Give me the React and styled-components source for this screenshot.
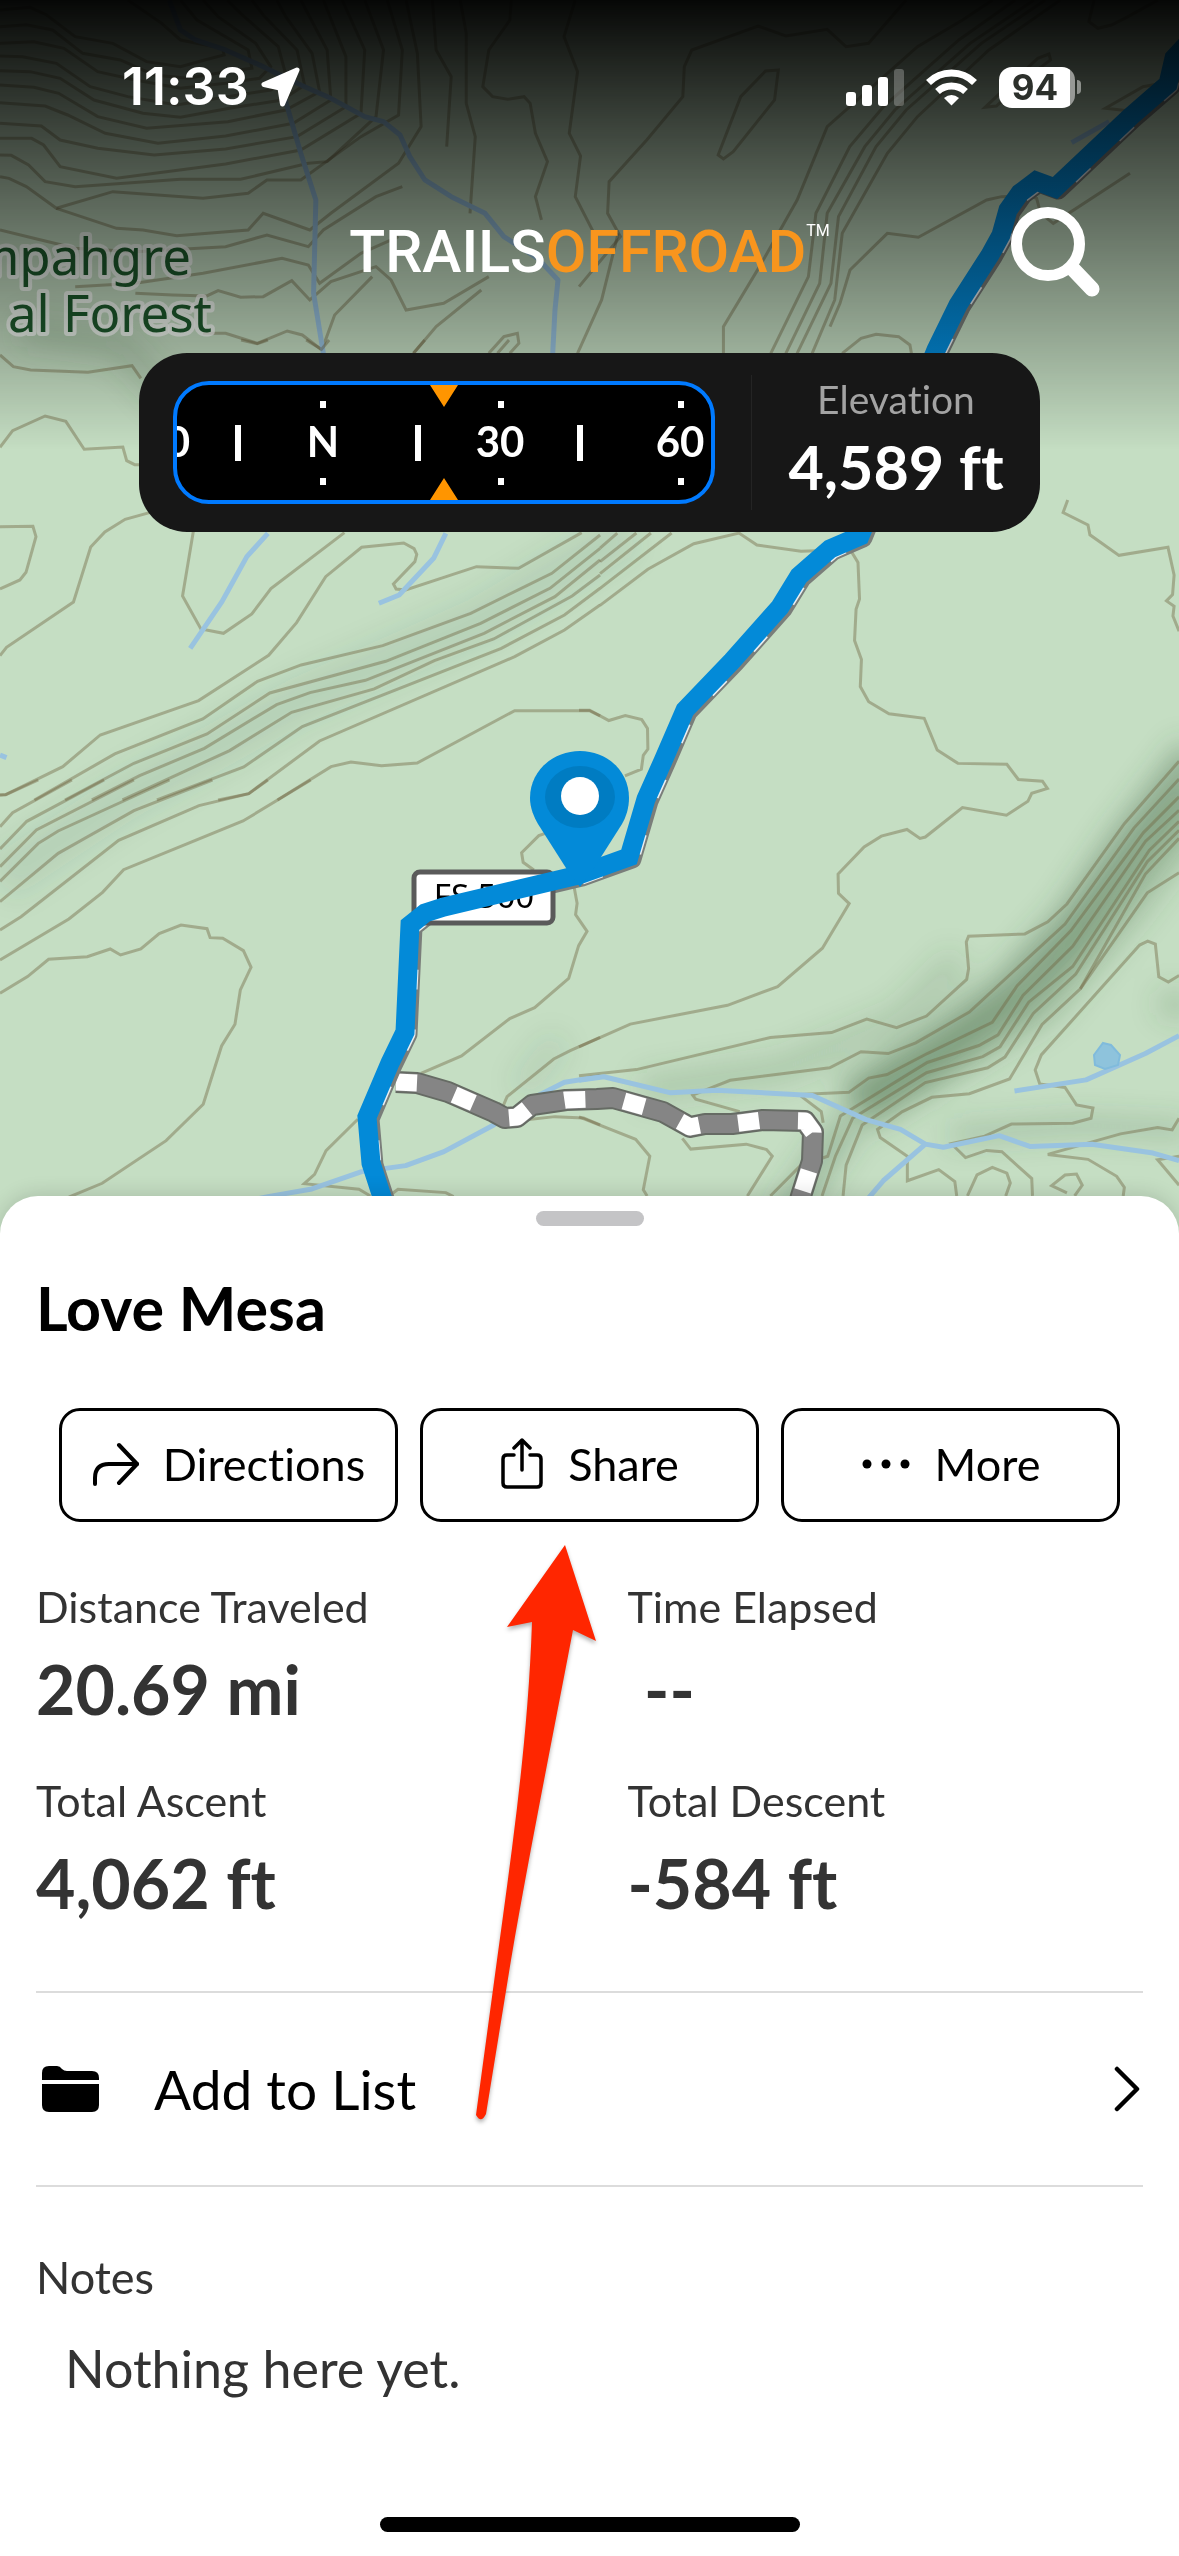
import React from 'react';
import styled, { createGlobalStyle } from 'styled-components';

const GlobalStyle = createGlobalStyle`
  *, *::before, *::after { box-sizing: border-box; }
  body {
    margin: 0;
    background: #fff;
    font-family: Lato, "Open Sans", sans-serif;
    font-variant-ligatures: none;
    -webkit-font-smoothing: antialiased;
  }
  button { font: inherit; color: inherit; cursor: pointer; }
`;

/* ---------- page shell ---------- */

const Page = styled.main`
  display: flex;
  flex-direction: column;
  min-height: 100vh;
`;

const Hero = styled.section`
  position: relative;
  flex: 1;
  min-height: 640px;
  overflow: hidden;
  background: #c5dec3;
`;

const MapCanvas = styled.svg`
  position: absolute;
  inset: 0;
  width: 100%;
  height: 100%;
`;

const TopShade = styled.div`
  position: absolute;
  inset: 0 0 auto;
  height: 450px;
  background: linear-gradient(rgba(0, 0, 0, 0.97), rgba(0, 0, 0, 0));
`;

const HeroContent = styled.div`
  position: relative;
  display: flex;
  flex-direction: column;
  color: #fff;
`;

/* ---------- status bar ---------- */

const StatusBar = styled.header`
  display: flex;
  align-items: center;
  justify-content: space-between;
  padding: 60px 98px 0 122px;
  font-family: Inter, "Liberation Sans", sans-serif;
`;

const StatusGroup = styled.div`
  display: flex;
  align-items: center;
  gap: ${(p) => p.$gap}px;
`;

const Clock = styled.time`
  font-size: 52px;
  line-height: 54px;
  font-weight: 600;
`;

const Battery = styled.div`
  display: flex;
  align-items: center;
  gap: 2px;
  &::after {
    content: "";
    width: 4px;
    height: 14px;
    border-radius: 0 4px 4px 0;
    background: #8d908c;
  }
`;

const BatteryLevel = styled.span`
  width: 76px;
  height: 41px;
  border-radius: 13px;
  background: linear-gradient(90deg, #fff 71px, #979996 71px);
  color: #2c302b;
  font-size: 35px;
  line-height: 41px;
  font-weight: 700;
  text-align: center;
  padding-right: 4px;
`;

/* ---------- brand row ---------- */

const BrandRow = styled.div`
  display: grid;
  grid-template-columns: 1fr auto 1fr;
  align-items: center;
  margin-top: 93px;
  padding: 0 79px;
`;

const Logo = styled.h1`
  grid-column: 2;
  display: flex;
  align-items: flex-start;
  margin: 0;
  font-family: Roboto, "Liberation Sans", sans-serif;
  font-size: 59px;
  line-height: 90px;
  font-weight: 500;
`;

const LogoAccent = styled.span`
  color: #f8951d;
`;

const TradeMark = styled.span`
  font-size: 16px;
  line-height: 48px;
  font-weight: 400;
`;

const SearchButton = styled.button`
  justify-self: end;
  display: flex;
  padding: 0;
  border: 0;
  background: none;
  color: #fff;
`;

/* ---------- compass card ---------- */

const CompassCard = styled.section`
  display: flex;
  align-items: center;
  align-self: center;
  width: calc(100% - 278px);
  margin-top: 56px;
  padding: 22px 0 22px 34px;
  border-radius: 48px;
  background: #171717;
`;

const Dial = styled.div`
  flex: none;
  display: flex;
  margin: 6px 36px 6px 0;
  border: 4px solid #007aff;
  border-radius: 36px;
  background: #000;
  overflow: hidden;
`;

const DialText = styled.text`
  fill: #fff;
  font: 700 42px Lato, sans-serif;
  text-anchor: ${(p) => p.$anchor || 'middle'};
`;

const Elevation = styled.dl`
  flex: 1;
  align-self: stretch;
  display: flex;
  flex-direction: column;
  gap: 8px;
  margin: 0;
  border-left: 1px solid #242424;
  text-align: center;
`;

const ElevationLabel = styled.dt`
  font-size: 39px;
  line-height: 48px;
  color: #a3a3a3;
`;

const ElevationValue = styled.dd`
  margin: 0;
  font-size: 61px;
  line-height: 72px;
  font-weight: 700;
`;

/* ---------- map text ---------- */

const ForestLabel = styled.text`
  font: 400 51px "Noto Sans", sans-serif;
  fill: #1d5a2c;
  stroke: rgba(255, 255, 255, 0.7);
  stroke-width: 8px;
  stroke-linejoin: round;
  paint-order: stroke;
  text-anchor: end;
`;

const ShieldText = styled.text`
  font: 400 33px "Noto Sans", sans-serif;
  fill: #000;
  text-anchor: middle;
`;

/* ---------- bottom sheet ---------- */

const Sheet = styled.section`
  position: relative;
  display: flex;
  flex-direction: column;
  margin-top: -40px;
  padding: 15px 36px 24px;
  border-radius: 38px 38px 0 0;
  background: #fff;
  box-shadow: 0 -2px 20px rgba(0, 0, 0, 0.14);
  color: #333;
`;

const Handle = styled.div`
  align-self: center;
  width: 108px;
  height: 15px;
  border-radius: 8px;
  background: #c4c4c6;
`;

const Title = styled.h2`
  margin: 46px 0 0;
  font-size: 61px;
  line-height: 72px;
  font-weight: 700;
  color: #000;
`;

const Actions = styled.div`
  display: grid;
  grid-template-columns: repeat(3, 1fr);
  gap: 22px;
  margin: 64px 23px 0;
`;

const ActionButton = styled.button`
  display: flex;
  align-items: center;
  justify-content: center;
  gap: 24px;
  padding: 26px 0 28px;
  border: 3px solid #000;
  border-radius: 21px;
  background: #fff;
  color: #000;
  font-size: 45px;
  line-height: 54px;
`;

const Stats = styled.dl`
  display: grid;
  grid-template-columns: 1fr 1fr;
  gap: 46px 76px;
  margin: 59px 0 0;
`;

const Stat = styled.div`
  display: flex;
  flex-direction: column;
  gap: 16px;
`;

const StatLabel = styled.dt`
  font-size: 43px;
  line-height: 52px;
`;

const StatValue = styled.dd`
  margin: 0;
  font-size: 68px;
  line-height: 80px;
  font-weight: 700;
  white-space: pre;
`;

const ListButton = styled.button`
  display: flex;
  align-items: center;
  gap: 54px;
  margin-top: 68px;
  padding: 63px 3px 63px 6px;
  border: solid #dcdcdc;
  border-width: 2px 0;
  background: none;
  color: #000;
  font-size: 55px;
  line-height: 66px;
  text-align: left;
`;

const ListLabel = styled.span`
  flex: 1;
`;

const NotesTitle = styled.h3`
  margin: 63px 0 0;
  font-size: 45px;
  line-height: 54px;
  font-weight: 400;
`;

const NotesBody = styled.p`
  margin: 33px 0 0;
  padding-left: 29px;
  font-size: 52px;
  line-height: 62px;
`;

const HomeIndicator = styled.div`
  align-self: center;
  width: 420px;
  height: 15px;
  margin-top: 118px;
  border-radius: 8px;
  background: #000;
`;

const Pointer = styled.svg`
  position: absolute;
  top: 341px;
  left: calc(50% - 120px);
  pointer-events: none;
  filter: drop-shadow(0 3px 2px rgba(0, 0, 0, 0.3));
`;

/* ---------- map data ---------- */

const tiles = [
  {
    transform: 'scale(0.752 0.3333)',
    contours: [
      'M0 30L40 22L62 45L100 110L150 130L195 185L240 200L272 180L298 165L296 145L240 120L215 70L170 0',
      'M0 80L35 74L70 90L110 160L160 180L205 225L250 235L300 215L335 205L330 150L262 60L240 0',
      'M0 130L45 125L85 145L130 215L180 240L240 265L300 250L345 235L360 200L340 130L290 50L270 0',
      'M0 168L30 170L75 190L120 260L170 290L235 315L302 290L360 270L382 240L370 140L320 40L302 0',
      'M0 212L40 215L80 235L125 300L190 340L240 352L305 325L375 300L405 255L395 150L350 45L335 0',
      'M0 255L45 262L78 280L130 350L195 385L303 365L380 330L425 275L415 160L380 50L368 0',
      'M0 308L60 318L90 345L140 400L210 430L300 408L390 370L440 300L435 150L400 0',
      'M0 370L55 378L80 420L130 445L205 465L300 447L395 410L460 320L460 170L430 0',
      'M0 415L42 415L58 435L80 500L155 535L300 492L400 450L480 340L485 150L455 0',
      'M0 465L15 466L38 495L60 545L100 560L240 538L320 538L410 490L435 485L500 350L510 150L485 0',
      'M0 530L12 535L35 560L75 625L150 575L270 595L330 580L355 540L400 540L480 410L530 345L535 150L515 0',
      'M75 625L155 685L190 690L235 707L330 690L350 640L412 690L440 640L530 490L560 380L555 160L540 0',
      'M0 690L45 715L100 745L180 755L300 740L355 705L410 740L430 690L500 590L535 560',
      'M100 860L180 850L270 820L375 775L410 795L425 850L480 760L530 710',
      'M180 880L230 885L275 888L290 872L320 892L350 890L388 842L412 900L440 845L500 800L520 840L540 930L590 910L650 830',
      'M270 1000L300 1000L342 1030L382 993L402 1005L428 1050L445 945L495 830',
      'M575 0L580 150L600 230L594 440',
      'M612 0L620 100L620 310L632 410L625 640',
      'M680 0L678 60L650 150L642 260L655 290L675 298L697 290L705 310L712 400L728 485L712 590L720 660',
      'M765 0L750 110L768 215L757 400L772 468L765 590L790 700',
      'M1205 0L1155 130L1125 140L1100 88L1045 108L1008 78L920 150L910 200L908 290L860 420L810 545L808 640L825 710L770 860',
      'M1035 210L1018 213L985 290L955 465L962 477L975 455L1030 300Z',
      'M1320 0L1280 60L1220 140L1165 250L1100 380L1080 490L1060 600L1010 800L962 980L962 1060',
      'M1350 0L1275 120L1175 320L1130 440L1085 640L1075 830L1025 1060',
      'M1375 0L1290 130L1190 330L1150 440L1100 640L1090 850L1045 1060',
      'M1390 0L1305 130L1205 330L1165 440L1115 650L1105 850L1060 1060',
      'M1410 0L1315 150L1220 350L1180 460L1120 700L1110 900L1080 1060',
      'M1395 162L1380 175L1325 290L1310 322L1325 318L1370 225L1397 180Z',
      'M1455 0L1448 65L1460 85L1478 75L1500 50L1540 0',
      'M1568 240L1520 260L1470 325L1500 332',
      'M1120 1060L1145 1015L1165 1003L1195 1010L1210 1035L1212 1060',
      'M550 1060L580 980L640 870M650 1060L670 1010L688 1000L690 1030L678 1060M768 1060L800 900L822 700',
    ],
    streams: [
      'M225 0L240 90L260 120L300 150L350 200L400 255L440 295L485 350L510 365L532 405L545 470L565 540L600 590L645 640L670 710L715 775L742 840L738 930L735 1060',
      'M378 290L400 460L420 600L417 880L430 1060',
      'M1425 428L1475 365',
    ],
  },
  {
    transform: 'translate(830 50) scale(0.3333)',
    contours: [
      'M0 830L30 760L60 660L172 550L265 562L470 450L515 440L600 438L620 445L632 490L670 520L900 370',
    ],
    streams: [],
  },
  {
    transform: 'translate(0 340) scale(0.3827 0.3333)',
    contours: [
      'M0 45L35 80L80 90L230 97L345 77L368 115',
      'M630 0L672 11L700 0M800 0L840 28L860 0M1080 40L1110 0M1300 40L1330 0',
      'M0 322L33 272L118 228L172 244L220 328L321 321L331 362L352 374L380 374',
      'M0 560L86 559L94 590L68 697L52 720L0 747',
      'M0 947L17 922L192 786L237 621L274 576L327 538L400 515',
      'M505 575L477 768L525 867L584 880L658 822L708 746L900 578',
      'M1520 578L1355 685L1245 680L1060 750L1035 747L1028 732L1084 665L1089 643L1082 626L1055 609L945 622L851 710L775 848L702 946L519 1082L262 1185L164 1280L15 1364L0 1365',
      'M1568 585L1442 700L1230 820L1000 917L787 975L673 1024L530 1137L300 1242L90 1380',
      'M1568 625L1437 745L1256 850L1008 964L705 1059L541 1182L350 1270L170 1380',
      'M1568 660L1450 770L1265 880L955 1021L810 1058L723 1094L534 1225L365 1307L240 1380',
      'M1568 705L1495 768L1290 897L1135 962L978 1047L762 1117L600 1232L320 1380',
      'M1568 745L1475 825L1310 925L790 1160L637 1281L410 1380',
      'M1568 795L1475 870L1345 950L835 1203L650 1361L570 1380',
      'M1568 1128L1540 1112L1345 1112L1090 1269L997 1277L917 1266L865 1280L725 1380',
    ],
    streams: [
      'M700 580L645 650L580 785L497 925',
      'M1165 580L1133 655L1043 765L990 790',
      'M0 1245L17 1253',
    ],
  },
  {
    transform: 'translate(0 780) scale(0.3827 0.3333)',
    contours: [
      'M0 45L15 44L100 0',
      'M0 140L33 98L188 0',
      'M0 207L70 124L272 0',
      'M0 260L95 150L350 0',
      'M0 304L100 190L152 153L443 0',
      'M0 365L152 220L350 92L555 0',
      'M0 450L55 410L310 181L520 77L650 41L700 0',
      'M0 540L180 417L268 337L323 269L635 123L812 0',
      'M0 640L72 590L127 538L228 530L288 507L315 525L368 507L416 461L473 435L541 446L549 473L582 475L636 512L656 562L628 630L614 733L579 798L531 973L434 1082L267 1210L183 1250L120 1290',
      'M1425 160L1408 167L1363 218L1367 247L1395 270',
      'M1500 320L1508 370L1504 404L1534 454L1512 497L1486 595L1397 683L1332 716L1206 828L1100 880',
      'M1568 772L1490 812L1447 837L1325 950L1312 985',
      'M1568 1035L1525 1014L1450 1010L1370 1020',
      'M935 1018L852 1112L822 1183L795 1211L938 1228L968 1248',
      'M1020 1245L1040 1228L1165 1238L1185 1250',
    ],
    streams: [
      'M660 1260L700 1250L815 1227L945 1175L1060 1157L1160 1115L1290 1035L1400 950L1475 907L1568 890',
    ],
  },
  {
    transform: 'translate(579 500) scale(0.3827 0.4464)',
    contours: [
      'M55 236L180 155L300 98L418 74L465 101L580 115L640 113',
      'M55 198L242 74M55 165L188 74M55 138L150 74M55 108L100 74',
      'M710 113L729 140L733 222L724 245L720 315L738 357L735 418L757 452L810 479L902 489L936 560L990 590L1118 592L1148 626L1211 630L1224 646L1183 657L1173 675L1117 706L1002 689L905 755L891 758L857 738L790 753L745 777L677 838L678 881L706 904L636 1004L519 1090L388 1132L134 1174L0 1225',
      'M1277 0L1265 28L1330 56L1335 78L1411 124L1539 106L1555 168L1551 212L1535 226L1555 238L1552 260L1568 294',
      'M0 471L28 471L78 494L121 483L164 492L179 512L180 558L168 572L163 603L120 618',
      'M1568 585L1425 725L1275 905L1225 945L1165 972L1018 977L1012 990L1018 1050L1013 1074L908 1156L830 1182L752 1163L660 1193L500 1204L150 1276L0 1290',
      'M1568 625L1450 735L1270 950L1020 1147L880 1216L808 1240L737 1236L655 1272L395 1300L297 1333L305 1342L420 1370',
      'M1568 665L1475 745L1285 965L1145 1088L1080 1170L910 1240L805 1287L757 1295L705 1327L575 1332L633 1370L638 1395',
      'M1568 695L1480 765L1290 1000L1160 1110L1095 1198L1045 1222L910 1260L683 1380L650 1470L580 1490L500 1559',
      'M1568 720L1490 785L1290 1045L1175 1125L1100 1225L1055 1247L908 1283L715 1385L670 1470L635 1559',
      'M1568 740L1485 810L1298 1062L1187 1150L1113 1248L1068 1272L905 1305L740 1400L698 1490L690 1559',
      'M1568 758L1480 838L1310 1095L1210 1175L1125 1297L1020 1330L922 1338L845 1370L780 1410L787 1428L858 1470L858 1525L940 1500L982 1527L987 1559',
      'M1568 835L1485 880L1310 1095',
      'M1568 1065L1540 1080L1515 1068L1506 995L1486 988L1465 997L1208 1243L1192 1277L1204 1308L1270 1316L1300 1355L1343 1362L1338 1385L1290 1396L1130 1398L1060 1425L973 1442L1010 1473L1065 1457L1105 1460L1183 1520L1185 1559',
      'M1568 1385L1550 1411L1512 1406L1415 1420L1225 1466L1330 1477L1405 1515L1425 1540L1422 1559',
      'M1568 1470L1512 1478L1568 1535',
      'M1015 1559L1040 1512L1080 1495L1118 1508L1127 1530L1115 1559',
      'M1275 1552L1235 1536L1270 1512L1300 1510L1315 1535L1295 1559',
      'M0 1382L148 1432L185 1470L168 1545L178 1559',
      'M270 1430L292 1454L437 1443L490 1455L505 1470L440 1559',
    ],
    streams: [
      'M0 1300L65 1292L240 1328L360 1322L610 1334L750 1388L840 1410L905 1443L952 1450L1098 1424L1178 1448L1340 1443L1500 1463L1568 1480',
      'M905 1443L795 1525L750 1570',
      'M1138 1324L1325 1299L1480 1240L1568 1200',
    ],
  },
];

const route =
  'M1200 30L1174 58L1168 84L1130 117L1055 188L1036 181L1020 193L1008 210L1001 235L990 255L958 305L936 350L860 536L830 549L799 576L780 607L732 661L685 710L663 761L646 799L629 857L579 875L444 907L425 913L410 925L405 1032L390 1063L367 1117L371 1163L383 1200L392 1240';

const track =
  'M396 1082L417 1083L448 1092L494 1112L505 1118L517 1117L532 1105L566 1100L597 1099L613 1098L663 1112L690 1127L705 1124L732 1124L763 1120L805 1121L813 1132L812 1161L801 1196L790 1240';

function TrailMap() {
  return (
    <MapCanvas viewBox="0 0 1179 1236" preserveAspectRatio="xMidYMin slice" role="img" aria-label="Trail map">
      <defs>
        <filter id="shade" x="-30%" y="-30%" width="160%" height="160%">
          <feGaussianBlur stdDeviation="14" />
        </filter>
      </defs>
      <rect width="1179" height="1236" fill="#c5dec3" />
      <g fill="none" stroke="#3f6344" strokeLinejoin="round" filter="url(#shade)">
        <path d="M1200 755L1130 845L1075 925L1010 995L930 1055L850 1105" strokeWidth="46" opacity="0.38" />
        <path d="M1200 800L1120 905L1040 1000L940 1060L860 1110" strokeWidth="50" opacity="0.24" />
        <path d="M960 960L900 1020L780 1070L640 1090" strokeWidth="30" opacity="0.16" />
        <path d="M850 1120L810 1180L780 1220" strokeWidth="30" opacity="0.3" />
        <path d="M950 1135L1080 1125L1190 1130" strokeWidth="16" opacity="0.26" />
        <path d="M630 530L480 620L300 700L120 800L0 880" strokeWidth="46" opacity="0.1" />
        <path d="M20 330L120 345L170 400" strokeWidth="30" opacity="0.16" />
        <path d="M1160 1000L1190 1010" strokeWidth="26" opacity="0.22" />
        <path d="M560 1040L520 1090" strokeWidth="26" opacity="0.1" />
      </g>
      {tiles.map((tile) => (
        <g key={tile.transform} transform={tile.transform} fill="none">
          {tile.contours.map((d) => (
            <path key={d} d={d} stroke="#6f6440" strokeOpacity="0.42" strokeWidth="3" vectorEffect="non-scaling-stroke" />
          ))}
          {tile.streams.map((d) => (
            <path key={d} d={d} stroke="#99c3e0" strokeWidth="5" strokeLinejoin="round" vectorEffect="non-scaling-stroke" />
          ))}
        </g>
      ))}
      <path d="M1103 1043L1111 1045L1120 1055L1118 1065L1105 1069L1095 1065L1094 1055Z" fill="#8ec3dc" stroke="#80bbdc" strokeWidth="2" />
      <ForestLabel x="191" y="275">mpahgre</ForestLabel>
      <ForestLabel x="212" y="332">al Forest</ForestLabel>

      <g fill="none" strokeLinejoin="round">
        <path d={track} stroke="#666b64" strokeWidth="22" />
        <path d={track} stroke="#858585" strokeWidth="18" />
        <path d={track} stroke="#fff" strokeWidth="17" strokeDasharray="21 39" />
        <path d={route} stroke="#7a7e7a" strokeWidth="19" transform="translate(3 2)" />
        <path d={route} stroke="#e8eef2" strokeWidth="15" strokeDasharray="20 40" transform="translate(3 2)" />
      </g>
      <rect x="414" y="872" width="139" height="51" rx="6" fill="#fff" stroke="#5a5a5a" strokeWidth="5" />
      <ShieldText x="484" y="908">FS 500</ShieldText>
      <path d={route} fill="none" stroke="#038ad8" strokeWidth="19" strokeLinejoin="miter" />
      <path d="M580 751C553 751 530 771 530 798C530 808 534 817 538 824L566 868L580 887L594 868L622 824C626 817 629 808 629 798C629 771 607 751 580 751Z" fill="#038ad8" />
      <ellipse cx="580" cy="797" rx="35" ry="31" fill="#007cc2" />
      <circle cx="580" cy="796" r="19" fill="#fff" />
    </MapCanvas>
  );
}

/* ---------- icons ---------- */

const LocationIcon = () => (
  <svg width="40" height="40" viewBox="0 0 40 40" aria-hidden="true">
    <path d="M36 3L3 17.500L19 21L21.500 37Z" fill="#fff" stroke="#fff" strokeWidth="5" strokeLinejoin="round" />
  </svg>
);

const SignalIcon = () => (
  <svg width="58" height="38" viewBox="0 0 58 38" aria-hidden="true">
    <rect x="0" y="24" width="10" height="14" rx="3" fill="#fff" />
    <rect x="16" y="17" width="10" height="21" rx="3" fill="#fff" />
    <rect x="32" y="9" width="10" height="29" rx="3" fill="#fff" />
    <rect x="48" y="1" width="10" height="37" rx="3" fill="#fff" opacity="0.25" />
  </svg>
);

const WifiIcon = () => (
  <svg width="51" height="38" viewBox="0 0 51 38" aria-hidden="true" fill="none" stroke="#fff" strokeWidth="7">
    <path d="M2.500 14.500Q12 5 25.500 5Q39 5 48.500 14.500" />
    <path d="M11.500 23.500Q17.500 18 25.500 18Q33.500 18 39.500 23.500" />
    <path d="M18 30Q25.500 24 33 30L25.500 37.500Z" fill="#fff" stroke="none" />
  </svg>
);

const SearchIcon = () => (
  <svg width="90" height="90" viewBox="0 0 90 90" aria-hidden="true" fill="none" stroke="#fff">
    <circle cx="38" cy="37" r="31.500" strokeWidth="11" />
    <path d="M62 61L82 82" strokeWidth="15" strokeLinecap="round" />
  </svg>
);

const DirectionsIcon = () => (
  <svg width="47" height="44" viewBox="0 0 47 44" aria-hidden="true" fill="none" stroke="#000" strokeWidth="4" strokeLinecap="round" strokeLinejoin="round">
    <path d="M27 3L45 22L27 41" />
    <path d="M45 22H17Q3 22 3 36V42" />
  </svg>
);

const ShareIcon = () => (
  <svg width="44" height="52" viewBox="0 0 44 52" aria-hidden="true" fill="none" stroke="#000" strokeWidth="3.500" strokeLinecap="round" strokeLinejoin="round">
    <path d="M14 17H7Q3 17 3 21V45Q3 49 7 49H37Q41 49 41 45V21Q41 17 37 17H30" />
    <path d="M22 32V2M14 10L22 2L30 10" />
  </svg>
);

const DotsIcon = () => (
  <svg width="50" height="12" viewBox="0 0 50 12" aria-hidden="true">
    <circle cx="6" cy="6" r="4.500" />
    <circle cx="25" cy="6" r="4.500" />
    <circle cx="44" cy="6" r="4.500" />
  </svg>
);

const FolderIcon = () => (
  <svg width="58" height="46" viewBox="0 0 58 46" aria-hidden="true">
    <path d="M0 14V7Q0 0 7 0H15Q18 0 20 3Q22 5 25 5H50Q57 5 57 12V14Z" />
    <path d="M0 18H57V39Q57 46 50 46H7Q0 46 0 39Z" />
  </svg>
);

const ChevronIcon = () => (
  <svg width="26" height="46" viewBox="0 0 26 46" aria-hidden="true" fill="none" stroke="#000" strokeWidth="4.500" strokeLinecap="round" strokeLinejoin="round">
    <path d="M3 3L23 23L3 43" />
  </svg>
);

function CompassTape() {
  return (
    <svg width="534" height="115" viewBox="0 0 534 115" role="img" aria-label="Compass heading">
      <DialText x="13" y="72" $anchor="end">330</DialText>
      <DialText x="146" y="72">N</DialText>
      <DialText x="323" y="72">30</DialText>
      <DialText x="503" y="72">60</DialText>
      <g fill="#fff">
        <rect x="58" y="40" width="6" height="36" />
        <rect x="238" y="40" width="6" height="36" />
        <rect x="400" y="40" width="6" height="36" />
        <rect x="143" y="16" width="6" height="7" />
        <rect x="321" y="16" width="6" height="7" />
        <rect x="501" y="16" width="6" height="7" />
        <rect x="143" y="93" width="6" height="7" />
        <rect x="321" y="93" width="6" height="7" />
        <rect x="501" y="93" width="6" height="7" />
      </g>
      <path d="M253 0H281L267 22ZM253 115H281L267 93Z" fill="#ff9500" />
    </svg>
  );
}

const stats = [
  { label: 'Distance Traveled', value: '20.69 mi' },
  { label: 'Time Elapsed', value: ' --' },
  { label: 'Total Ascent', value: '4,062 ft' },
  { label: 'Total Descent', value: '-584 ft' },
];

const actions = [
  { label: 'Directions', Icon: DirectionsIcon },
  { label: 'Share', Icon: ShareIcon },
  { label: 'More', Icon: DotsIcon },
];

export default function App() {
  return (
    <>
      <GlobalStyle />
      <Page>
        <Hero>
          <TrailMap />
          <TopShade />
          <HeroContent>
            <StatusBar>
              <StatusGroup $gap={12}>
                <Clock>11:33</Clock>
                <LocationIcon />
              </StatusGroup>
              <StatusGroup $gap={22}>
                <SignalIcon />
                <WifiIcon />
                <Battery>
                  <BatteryLevel>94</BatteryLevel>
                </Battery>
              </StatusGroup>
            </StatusBar>

            <BrandRow>
              <Logo>
                TRAILS<LogoAccent>OFFROAD</LogoAccent>
                <TradeMark>TM</TradeMark>
              </Logo>
              <SearchButton type="button" aria-label="Search">
                <SearchIcon />
              </SearchButton>
            </BrandRow>

            <CompassCard>
              <Dial>
                <CompassTape />
              </Dial>
              <Elevation>
                <ElevationLabel>Elevation</ElevationLabel>
                <ElevationValue>4,589 ft</ElevationValue>
              </Elevation>
            </CompassCard>
          </HeroContent>
        </Hero>

        <Sheet>
          <Handle />
          <Title>Love Mesa</Title>
          <Actions>
            {actions.map(({ label, Icon }) => (
              <ActionButton key={label} type="button">
                <Icon />
                {label}
              </ActionButton>
            ))}
          </Actions>
          <Stats>
            {stats.map(({ label, value }) => (
              <Stat key={label}>
                <StatLabel>{label}</StatLabel>
                <StatValue>{value}</StatValue>
              </Stat>
            ))}
          </Stats>
          <ListButton type="button">
            <FolderIcon />
            <ListLabel>Add to List</ListLabel>
            <ChevronIcon />
          </ListButton>
          <NotesTitle>Notes</NotesTitle>
          <NotesBody>Nothing here yet.</NotesBody>
          <HomeIndicator />
          <Pointer width="130" height="590" viewBox="470 1537 130 590" aria-hidden="true">
            <path
              d="M565 1545L596 1641L573 1630C552 1740 528 1860 511 1960L486 2114Q481 2124 476 2115L497 1960C512 1850 528 1740 532 1622L507 1627Z"
              fill="#ff2600"
            />
          </Pointer>
        </Sheet>
      </Page>
    </>
  );
}
